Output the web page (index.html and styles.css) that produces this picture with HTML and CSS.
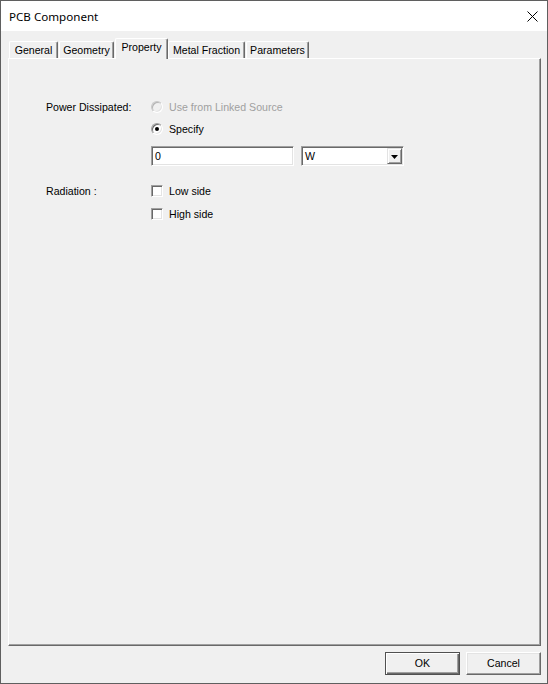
FILE: index.html
```html
<!DOCTYPE html>
<html>
<head>
<meta charset="utf-8">
<title>PCB Component</title>
<link rel="stylesheet" href="styles.css">
</head>
<body>
<div class="window">
  <div class="titlebar">
    <span class="title">PCB Component</span>
    <svg class="close" width="11" height="11" viewBox="0 0 11 11"><path d="M0.5 0.5 L10.5 10.5 M10.5 0.5 L0.5 10.5" stroke="#000" stroke-width="1" fill="none"/></svg>
  </div>
  <div class="client">
    <div class="tabs">
      <div class="tab t-general">General</div>
      <div class="tab t-geometry">Geometry</div>
      <div class="tab t-property selected">Property</div>
      <div class="tab t-metal">Metal Fraction</div>
      <div class="tab t-params">Parameters</div>
    </div>
    <div class="panel">
      <div class="section">
        <div class="label">Power Dissipated:</div>
        <div class="controls">
          <div class="row disabled"><span class="radio"></span><span>Use from Linked Source</span></div>
          <div class="row r-specify"><span class="radio checked"></span><span>Specify</span></div>
          <div class="inputs">
            <div class="edit"><span>0</span></div>
            <div class="combo"><span class="combo-text">W</span><span class="drop"><svg width="7" height="4" viewBox="0 0 7 4"><polygon points="0,0 7,0 3.5,4" fill="#000"/></svg></span></div>
          </div>
        </div>
      </div>
      <div class="section s-radiation">
        <div class="label">Radiation :</div>
        <div class="controls">
          <div class="row"><span class="check"></span><span>Low side</span></div>
          <div class="row r-high"><span class="check"></span><span>High side</span></div>
        </div>
      </div>
    </div>
    <div class="buttons">
      <div class="btn default">OK</div>
      <div class="btn">Cancel</div>
    </div>
  </div>
</div>
</body>
</html>
```
FILE: styles.css
```css
html, body {
  margin: 0;
  padding: 0;
}
body {
  width: 548px;
  height: 684px;
  font-family: "Liberation Sans", Arial, sans-serif;
  font-size: 10.6px;
  color: #000;
}
.window {
  width: 548px;
  height: 684px;
  box-sizing: border-box;
  border: 1px solid #5f5f5f;
  display: flex;
  flex-direction: column;
  background: #f0f0f0;
}
.titlebar {
  height: 30px;
  flex: none;
  background: #fff;
  display: flex;
  align-items: center;
  justify-content: space-between;
  padding-left: 8px;
  padding-right: 9px;
}
.title {
  font-family: "Noto Sans", "Liberation Sans", sans-serif;
  font-size: 11.6px;
  color: #000;
  margin-top: 1px;
}
.close {
  display: block;
}
.client {
  flex: 1;
  display: flex;
  flex-direction: column;
  padding: 7px 6px 8px 7px;
  min-height: 0;
}
.tabs {
  height: 20px;
  flex: none;
  display: flex;
  align-items: flex-end;
  padding-left: 1px;
  position: relative;
  z-index: 2;
}
.tab {
  box-sizing: border-box;
  height: 17px;
  border-top: 1px solid #fff;
  border-left: 1px solid #fff;
  border-right: 1px solid #696969;
  box-shadow: inset -1px 0 #a0a0a0;
  border-top-left-radius: 2px;
  border-top-right-radius: 2px;
  margin-right: 1px;
  text-align: center;
  line-height: 15px;
  padding-top: 1px;
  white-space: nowrap;
  background: #f0f0f0;
}
.t-general { width: 49px; }
.t-geometry { width: 55px; }
.t-property { width: 53px; margin-right: 0; }
.t-metal { width: 77px; }
.t-params { width: 63px; }
.tab.selected {
  height: 21px;
  margin-bottom: -1px;
}
.panel {
  flex: 1;
  box-sizing: border-box;
  border-top: 1px solid #fff;
  border-left: 1px solid #fff;
  border-right: 1px solid #696969;
  border-bottom: 1px solid #696969;
  box-shadow: inset -1px -1px #a0a0a0;
  padding: 39px 0 0 37px;
  min-height: 0;
}
.section {
  display: grid;
  grid-template-columns: 105px auto;
  align-items: start;
}
.s-radiation {
  margin-top: 16px;
}
.label {
  height: 18px;
  line-height: 18px;
  white-space: nowrap;
}
.controls {
  display: flex;
  flex-direction: column;
  align-items: flex-start;
}
.row {
  height: 18px;
  line-height: 18px;
  display: flex;
  align-items: center;
  gap: 6px;
  white-space: nowrap;
}
.r-specify {
  margin-top: 4px;
}
.r-high {
  margin-top: 5px;
}
.row.disabled {
  color: #a0a0a0;
}
.radio {
  box-sizing: border-box;
  width: 12px;
  height: 12px;
  border-radius: 50%;
  border: 1px solid;
  border-color: #a0a0a0 #ffffff #ffffff #a0a0a0;
  background: #fff;
  box-shadow: inset 1px 1px #696969, inset -1px -1px #e3e3e3;
  position: relative;
  flex: none;
}
.row.disabled .radio {
  border-color: #c8c8c8 #ffffff #ffffff #c8c8c8;
  box-shadow: inset 1px 1px #b4b4b4, inset -1px -1px #e3e3e3;
  background: #f0f0f0;
}
.radio.checked::after {
  content: "";
  position: absolute;
  left: 3px;
  top: 3px;
  width: 4px;
  height: 4px;
  border-radius: 50%;
  background: #000;
}
.check {
  box-sizing: border-box;
  width: 12px;
  height: 12px;
  border: 1px solid;
  border-color: #a0a0a0 #ffffff #ffffff #a0a0a0;
  box-shadow: inset 1px 1px #696969, inset -1px -1px #e3e3e3;
  background: #fff;
  flex: none;
}
.inputs {
  display: flex;
  gap: 7px;
  margin-top: 8px;
}
.edit, .combo {
  box-sizing: border-box;
  height: 20px;
  border: 1px solid;
  border-color: #a0a0a0 #ffffff #ffffff #a0a0a0;
  box-shadow: inset 1px 1px #696969, inset -1px -1px #e3e3e3;
  background: #fff;
  line-height: 18px;
  padding-left: 3px;
}
.edit {
  width: 143px;
}
.combo {
  width: 103px;
  display: flex;
  align-items: center;
  justify-content: space-between;
  padding-right: 1px;
}
.combo-text {
  line-height: 16px;
}
.drop {
  box-sizing: border-box;
  width: 15px;
  height: 16px;
  border: 1px solid;
  border-color: #e3e3e3 #696969 #696969 #e3e3e3;
  box-shadow: inset 1px 1px #fff, inset -1px -1px #a0a0a0;
  background: #f0f0f0;
  display: flex;
  align-items: center;
  justify-content: center;
}
.drop svg {
  display: block;
  margin-top: 1px;
}
.buttons {
  flex: none;
  display: flex;
  justify-content: flex-end;
  gap: 6px;
  margin-top: 6px;
}
.btn {
  box-sizing: border-box;
  width: 75px;
  height: 23px;
  border: 1px solid;
  border-color: #fff #696969 #696969 #fff;
  box-shadow: inset -1px -1px #a0a0a0, inset 1px 1px #e3e3e3;
  text-align: center;
  line-height: 21px;
  background: #f0f0f0;
}
.btn.default {
  border: 1px solid #505050;
  box-shadow: inset 1px 1px #fff, inset -1px -1px #696969, inset -2px -2px #a0a0a0;
}
```
